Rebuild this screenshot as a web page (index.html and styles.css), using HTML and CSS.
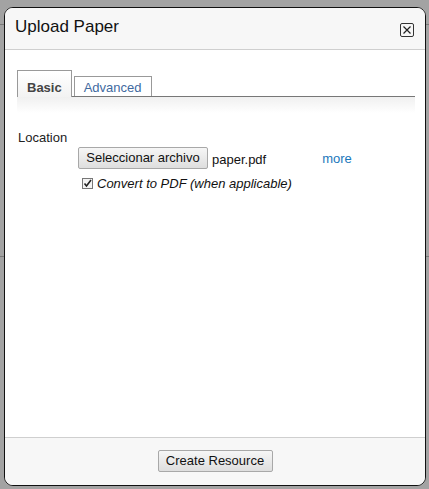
FILE: index.html
```html
<!DOCTYPE html>
<html>
<head>
<meta charset="utf-8">
<link rel="stylesheet" href="styles.css">
</head>
<body>
<div class="dialog">
  <div class="dlg-header">
    <span class="dlg-title">Upload Paper</span>
    <span class="close-btn"><svg width="10" height="10" viewBox="0 0 10 10"><path d="M1.5 1.5 L8.5 8.5 M8.5 1.5 L1.5 8.5" stroke="#222" stroke-width="1.2" fill="none"/></svg></span>
  </div>
  <div class="dlg-body">
    <div class="tabs">
      <div class="tab active">Basic</div>
      <div class="tab">Advanced</div>
    </div>
    <div class="tab-shade"></div>
    <div class="field-label">Location</div>
    <div class="file-row">
      <span class="btn file-btn">Seleccionar archivo</span>
      <span class="file-name">paper.pdf</span>
      <a class="more">more</a>
    </div>
    <div class="check-row">
      <span class="checkbox"><svg width="9" height="9" viewBox="0 0 9 9"><path d="M1.5 4.5 L3.5 7 L8 1" stroke="#222" stroke-width="1.6" fill="none"/></svg></span>
      <span class="check-label">Convert to PDF (when applicable)</span>
    </div>
  </div>
  <div class="dlg-footer">
    <span class="btn footer-btn">Create Resource</span>
  </div>
</div>
</body>
</html>
```
FILE: styles.css
```css
html, body {
  margin: 0;
  padding: 0;
}
body {
  width: 429px;
  height: 489px;
  overflow: hidden;
  font-family: "Liberation Sans", Arial, sans-serif;
  background:
    linear-gradient(#7a7a7a, #7a7a7a) 0 24px / 100% 1px no-repeat,
    linear-gradient(#7a7a7a, #7a7a7a) 0 256px / 100% 1px no-repeat,
    #a3a3a3;
}
.dialog {
  margin: 7px 0 0 4px;
  width: 420px;
  height: 477px;
  border: 1px solid #111;
  border-radius: 9px;
  background: #fff;
  display: flex;
  flex-direction: column;
  overflow: hidden;
}
.dlg-header {
  height: 41px;
  background: #f7f7f7;
  border-bottom: 1px solid #cfcfcf;
  display: flex;
  align-items: center;
  justify-content: space-between;
  padding: 0 10px;
}
.dlg-title {
  font-size: 17px;
  color: #111;
  margin-top: -4px;
}
.close-btn {
  width: 12px;
  height: 12px;
  border: 1px solid #333;
  border-radius: 2px;
  display: flex;
  align-items: center;
  justify-content: center;
  margin-top: 3px;
  margin-right: 1px;
}
.dlg-body {
  flex: 1;
  padding: 21px 10px 0 12px;
}
.tabs {
  display: flex;
  align-items: flex-end;
  gap: 2px;
  border-bottom: 1px solid #777;
  height: 25px;
}
.tab {
  font-size: 13px;
  color: #3f6a9f;
  border: 1px solid #999;
  border-bottom: none;
  padding: 0 9px;
  height: 19px;
  line-height: 21px;
  background: #fff;
}
.tab.active {
  font-weight: bold;
  color: #444;
  height: 26px;
  line-height: 33px;
  margin-bottom: -1px;
  background: linear-gradient(#fff, #f2f2f2);
}
.tab-shade {
  height: 16px;
  background: linear-gradient(#f0f0f0, #fff);
}
.field-label {
  font-size: 13px;
  color: #222;
  margin-top: 17px;
  margin-left: 1px;
}
.file-row {
  display: flex;
  align-items: center;
  margin-left: 61px;
  margin-top: 2px;
}
.btn {
  display: inline-block;
  box-sizing: border-box;
  font-size: 13px;
  color: #111;
  border: 1px solid #a8a8a8;
  border-radius: 2px;
  background: linear-gradient(#f6f6f6, #dedede);
  text-align: center;
  height: 22px;
  line-height: 20px;
}
.file-btn {
  width: 130px;
}
.footer-btn {
  width: 115px;
  margin-bottom: 1px;
}
.file-name {
  font-size: 13px;
  color: #111;
  margin-left: 4px;
  margin-top: 2px;
}
.more {
  font-size: 13px;
  color: #1a77bb;
  margin-left: 56px;
}
.check-row {
  display: flex;
  align-items: center;
  margin-left: 65px;
  margin-top: 7px;
}
.checkbox {
  width: 9px;
  height: 9px;
  border: 1px solid #777;
  background: #f4f4f4;
  display: flex;
  align-items: center;
  justify-content: center;
}
.check-label {
  font-size: 13px;
  font-style: italic;
  color: #111;
  margin-left: 4px;
}
.dlg-footer {
  height: 47px;
  border-top: 1px solid #cfcfcf;
  background: #f7f7f7;
  display: flex;
  align-items: center;
  justify-content: center;
}
```
